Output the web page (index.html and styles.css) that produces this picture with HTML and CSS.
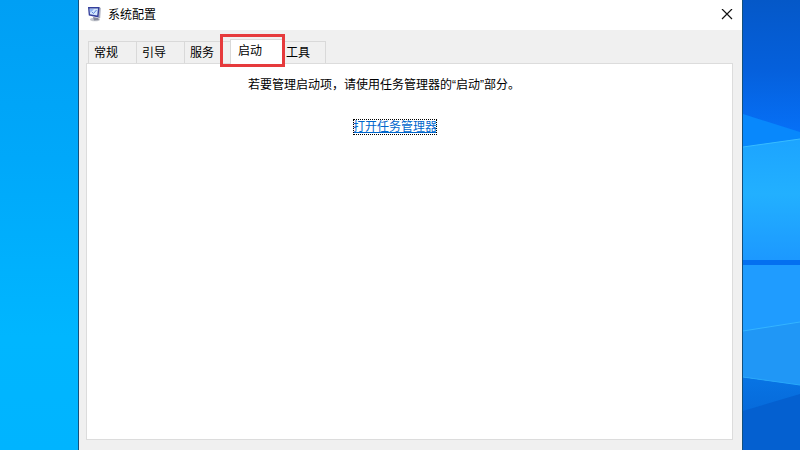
FILE: index.html
```
<!DOCTYPE html>
<html lang="zh-CN">
    <head>
        <meta charset="utf-8">
        <title>系统配置</title>
        <meta name="viewport" content="width=device-width, initial-scale=1">
        <link rel="stylesheet" href="styles.css">
    </head>
    <body>
        <div class="wall-left"></div>
        <main class="window">
            <header class="titlebar">
                <svg class="app-icon" width="16" height="16" viewBox="0 0 16 16">
                    <ellipse cx="8" cy="12.5" rx="5" ry="1.8" fill="#c6c9cf"/>
                    <path d="M6 10l5 1 1 2-5 .6z" fill="#85899a"/>
                    <path d="M12 0l1.800 1-.6 10-2 .6z" fill="#a9adbd"/>
                    <path d="M1 0l11.500 0-1 10.500L1.800 8.500z" fill="#343f9c"/>
                    <path d="M2.500 1.500l8.500 0-.8 7-7.200-1.300z" fill="#d4e7fc"/>
                    <path d="M3 2l4 .2-3.600 3.500z" fill="#8fb2f0"/>
                    <path d="M5 5l1.500 1.500 3-3.500" fill="none" stroke="#5d86dc" stroke-width="1"/>
                </svg>
                <h1>系统配置</h1>
                <button class="close" type="button" aria-label="关闭">
                    <svg width="12" height="12" viewBox="0 0 12 12">
                        <path d="M1 0l10 10M11 0L1 10" fill="none" stroke="#111" stroke-width="1.200"/>
                    </svg>
                </button>
            </header>
            <nav class="tabs" role="tablist">
                <button class="tab" type="button" role="tab">常规</button>
                <button class="tab" type="button" role="tab">引导</button>
                <button class="tab" type="button" role="tab">服务</button>
                <button class="tab active" type="button" role="tab" aria-selected="true">启动<span class="mark"></span></button>
                <button class="tab" type="button" role="tab">工具</button>
            </nav>
            <section class="panel" role="tabpanel">
                <p>若要管理启动项，请使用任务管理器的“启动”部分。</p>
                <a href="#">打开任务管理器</a>
            </section>
        </main>
        <svg class="wall-right" viewBox="0 0 57 450" preserveAspectRatio="none">
            <defs>
                <linearGradient id="sky" x1="0" y1="0" x2="0" y2="1">
                    <stop offset="0" stop-color="#0558c8"/>
                    <stop offset=".5" stop-color="#0560dc"/>
                    <stop offset="1" stop-color="#0672fa"/>
                </linearGradient>
                <linearGradient id="pane" x1="0" y1="0" x2="0" y2="1">
                    <stop offset="0" stop-color="#1ca4ff"/>
                    <stop offset=".45" stop-color="#22b0ff"/>
                    <stop offset="1" stop-color="#1c98ff"/>
                </linearGradient>
                <linearGradient id="floor" x1="0" y1="0" x2="0" y2="1">
                    <stop offset="0" stop-color="#0874e4"/>
                    <stop offset="1" stop-color="#0460d0"/>
                </linearGradient>
            </defs>
            <rect width="57" height="140" fill="url(#sky)"/>
            <path d="M0 114l57 18v16H0z" fill="#0888fc"/>
            <path d="M0 147l57-8v122H0z" fill="url(#pane)"/>
            <path d="M0 147l57-8" stroke="#38bcff" stroke-width="1"/>
            <rect y="260" width="57" height="5" fill="#0470f0"/>
            <rect y="265" width="57" height="70" fill="#1f9cff"/>
            <path d="M0 331l57-9v64L0 377z" fill="#2097f6"/>
            <path d="M0 331l57-9" stroke="#34b4ff" stroke-width="1"/>
            <path d="M0 377l57 8v65H0z" fill="url(#floor)"/>
            <path d="M0 411l57-17v56H0z" fill="#0460d0"/>
            <path d="M0 377l57 8" stroke="#28a8fa" stroke-width="1"/>
        </svg>
    </body>
</html>
```
FILE: styles.css
```
* { box-sizing: border-box; }
body {
    margin: 0;
    min-height: 100vh;
    display: grid;
    grid-template-columns: 78px 1fr 57px;
    font: 12px/16px "Liberation Sans", "Noto Sans CJK SC", sans-serif;
    color: #000;
}
h1, p { margin: 0; font-size: 12px; font-weight: normal; }
button { font: inherit; color: inherit; }

.wall-left { background: linear-gradient(#009ff4, #00a8fa 35%, #00b6ff 75%, #00b4ff); }
.wall-right { width: 100%; height: 100vh; display: block; }

.window {
    display: flex;
    flex-direction: column;
    background: #f0f0f0;
    border: solid #14507c;
    border-width: 0 1px;
    padding-bottom: 10px;
}
.titlebar {
    display: flex;
    align-items: center;
    height: 30px;
    padding: 0 8px;
    background: #fff;
}
.app-icon { margin-right: 5px; }
.close {
    display: flex;
    margin-left: auto;
    padding: 1px;
    border: 0;
    background: none;
}

.tabs {
    display: flex;
    align-items: flex-end;
    height: 34px;
    padding-left: 9px;
}
.tab {
    width: 48px;
    height: 23px;
    padding: 1px 5px 0;
    text-align: left;
    background: #f0f0f0;
    border: 1px solid #d9d9d9;
    border-right-width: 0;
}
.tab:last-child {
    padding-left: 7px;
    border-right-width: 1px;
}
.tab.active {
    position: relative;
    z-index: 1;
    width: 52px;
    height: 25px;
    margin: 0 -4px 0 -2px;
    padding: 0 7px 2px;
    background: #fff;
    border-bottom: 0;
}
/* red frame around the current tab */
.mark {
    position: absolute;
    inset: -6px -3px -3px -11px;
    border: 3px solid #e63a3c;
}

.panel {
    flex: 1;
    margin: -1px 9px 0 7px;
    padding: 13px 0 0 161px;
    background: #fff;
    border: 1px solid #dcdcdc;
}
.panel a {
    display: block;
    width: max-content;
    margin: 26px 0 0 105px;
    color: #0066cc;
    outline: 1px dotted #000;
    outline-offset: -1px;
}
```
